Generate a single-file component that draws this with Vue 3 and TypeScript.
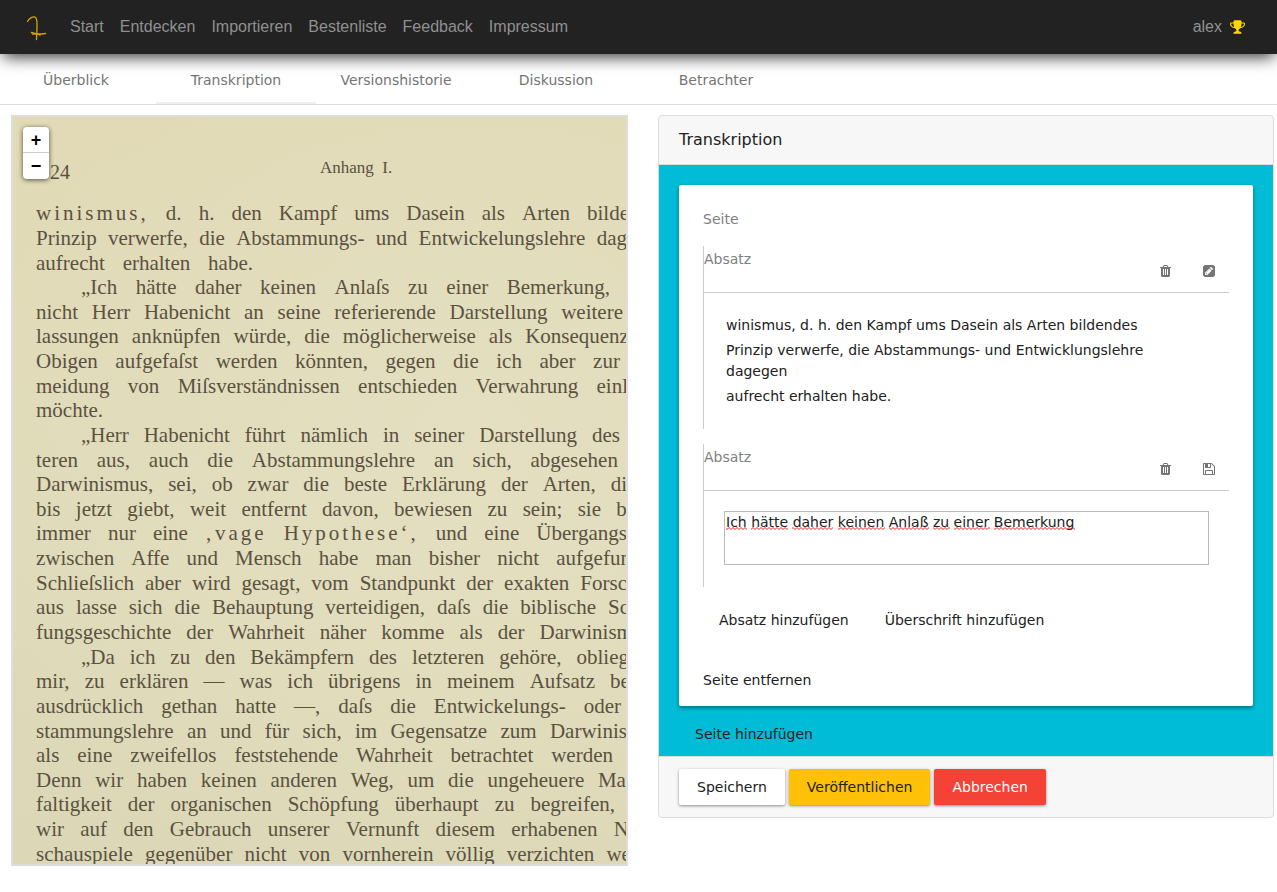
<script setup lang="ts">
import { ref } from 'vue'

interface ScanLine {
  text: string
  end: number
  indent?: boolean
}

const navItems = ['Start', 'Entdecken', 'Importieren', 'Bestenliste', 'Feedback', 'Impressum']
const tabs = ['Überblick', 'Transkription', 'Versionshistorie', 'Diskussion', 'Betrachter']
const activeTab = ref('Transkription')

// `end` is the width of the printed line in pixels, measured from the left text margin.
const scanLines: ScanLine[] = [
  { text: '*winismus, d. h. den Kampf ums Dasein als Arten bilde', end: 593 },
  { text: 'Prinzip verwerfe, die Abstammungs- und Entwickelungslehre dag', end: 591 },
  { text: 'aufrecht erhalten habe.', end: 217 },
  { text: '„Ich hätte daher keinen Anlaſs zu einer Bemerkung,', end: 574, indent: true },
  { text: 'nicht Herr Habenicht an seine referierende Darstellung weitere', end: 587 },
  { text: 'lassungen anknüpfen würde, die möglicherweise als Konsequenz', end: 593 },
  { text: 'Obigen aufgefaſst werden könnten, gegen die ich aber zur', end: 584 },
  { text: 'meidung von Miſsverständnissen entschieden Verwahrung einl', end: 592 },
  { text: 'möchte.', end: 73 },
  { text: '„Herr Habenicht führt nämlich in seiner Darstellung des', end: 584, indent: true },
  { text: 'teren aus, auch die Abstammungslehre an sich, abgesehen', end: 582 },
  { text: 'Darwinismus, sei, ob zwar die beste Erklärung der Arten, di', end: 591 },
  { text: 'bis jetzt giebt, weit entfernt davon, bewiesen zu sein; sie b', end: 591 },
  { text: 'immer nur eine *‚vage *Hypothese‘, und eine Übergangs', end: 591 },
  { text: 'zwischen Affe und Mensch habe man bisher nicht aufgefun', end: 595 },
  { text: 'Schlieſslich aber wird gesagt, vom Standpunkt der exakten Forsc', end: 591 },
  { text: 'aus lasse sich die Behauptung verteidigen, daſs die biblische Sc', end: 593 },
  { text: 'fungsgeschichte der Wahrheit näher komme als der Darwinism', end: 597 },
  { text: '„Da ich zu den Bekämpfern des letzteren gehöre, oblieg', end: 593, indent: true },
  { text: 'mir, zu erklären — was ich übrigens in meinem Aufsatz be', end: 594 },
  { text: 'ausdrücklich gethan hatte —, daſs die Entwickelungs- oder', end: 585 },
  { text: 'stammungslehre an und für sich, im Gegensatze zum Darwinis', end: 591 },
  { text: 'als eine zweifellos feststehende Wahrheit betrachtet werden', end: 577 },
  { text: 'Denn wir haben keinen anderen Weg, um die ungeheuere Ma', end: 590 },
  { text: 'faltigkeit der organischen Schöpfung überhaupt zu begreifen,', end: 579 },
  { text: 'wir auf den Gebrauch unserer Vernunft diesem erhabenen N', end: 593 },
  { text: 'schauspiele gegenüber nicht von vornherein völlig verzichten we', end: 595 },
]

const paragraph = [
  'winismus, d. h. den Kampf ums Dasein als Arten bildendes',
  'Prinzip verwerfe, die Abstammungs- und Entwicklungslehre dagegen',
  'aufrecht erhalten habe.',
]
const draft = ref('Ich hätte daher keinen Anlaß zu einer Bemerkung')
</script>

<template>
  <div class="app">
    <header class="navbar">
      <a class="brand" href="#" aria-label="Startseite">
        <svg viewBox="-1 -1 24 28" width="24" height="28" fill="none" stroke="#d9a300" stroke-linecap="round">
          <path stroke-width="1.3" d="M2.500 7.500C4.500 4 8 2.200 10 3.200C12.500 4.500 12 9 12 13L11.500 25.500" />
          <path stroke-width="1.5" d="M6.500 18.500C10 20.500 14 20.500 20.500 19.500M7.500 20C11 19.500 14 20 15 21" />
        </svg>
      </a>
      <nav class="nav">
        <a v-for="item in navItems" :key="item" href="#">{{ item }}</a>
      </nav>
      <a class="user" href="#">
        <span>alex</span>
        <svg viewBox="0 0 1664 1792" width="15" height="16" fill="#ffd700">
          <path d="M458 883q-74-162-74-371h-256v96q0 78 94.500 162t235.500 113zm1078-275v-96h-256q0 209-74 371 141-29 235.500-113t94.500-162zm128-128v128q0 71-41.500 143t-112 130-173 97.500-215.500 44.500q-42 54-95 95-38 34-52.500 72.500t-14.500 89.500q0 54 30.500 91t97.500 37q75 0 133.500 45.500t58.500 114.500v64q0 14-9 23t-23 9h-832q-14 0-23-9t-9-23v-64q0-69 58.500-114.500t133.500-45.500q67 0 97.500-37t30.500-91q0-51-14.500-89.500t-52.500-72.500q-53-41-95-95-113-5-215.500-44.500t-173-97.500-112-130-41.500-143v-128q0-40 28-68t68-28h288v-96q0-66 47-113t113-47h576q66 0 113 47t47 113v96h288q40 0 68 28t28 68z" />
        </svg>
      </a>
    </header>

    <nav class="tabs">
      <a
        v-for="tab in tabs"
        :key="tab"
        href="#"
        :class="{ active: tab === activeTab }"
        @click.prevent="activeTab = tab"
      >{{ tab }}</a>
    </nav>

    <main class="columns">
      <section class="viewer" aria-label="Scan">
        <div class="zoom">
          <button type="button" aria-label="Vergrößern">+</button>
          <button type="button" aria-label="Verkleinern">−</button>
        </div>
        <div class="folio">
          <span class="number">24</span>
          <span class="running">Anhang&nbsp; I.</span>
        </div>
        <div class="print">
          <div
            v-for="(line, i) in scanLines"
            :key="i"
            class="line"
            :class="{ indent: line.indent }"
            :style="{ width: line.end + 'px' }"
          >
            <span
              v-for="(word, j) in line.text.split(' ')"
              :key="j"
              :class="{ spaced: word.startsWith('*') }"
            >{{ word.replace('*', '') }}</span>
          </div>
        </div>
      </section>

      <section class="panel">
        <h1>Transkription</h1>
        <div class="body">
          <article class="sheet">
            <div class="label">Seite</div>

            <section class="block">
              <header>
                <span>Absatz</span>
                <div class="tools">
                  <button type="button" aria-label="Löschen">
                    <svg viewBox="0 0 1408 1792" width="11" height="14"><path d="M512 1376v-704q0-14-9-23t-23-9h-64q-14 0-23 9t-9 23v704q0 14 9 23t23 9h64q14 0 23-9t9-23zm256 0v-704q0-14-9-23t-23-9h-64q-14 0-23 9t-9 23v704q0 14 9 23t23 9h64q14 0 23-9t9-23zm256 0v-704q0-14-9-23t-23-9h-64q-14 0-23 9t-9 23v704q0 14 9 23t23 9h64q14 0 23-9t9-23zm-544-992h448l-48-117q-7-9-17-11h-317q-10 2-17 11zm928 32v64q0 14-9 23t-23 9h-96v948q0 83-47 143.500t-113 60.500h-832q-66 0-113-58.500t-47-141.500v-952h-96q-14 0-23-9t-9-23v-64q0-14 9-23t23-9h309l70-167q15-37 54-63t79-26h320q40 0 79 26t54 63l70 167h309q14 0 23 9t9 23z" /></svg>
                  </button>
                  <button type="button" aria-label="Bearbeiten">
                    <svg viewBox="0 0 1536 1792" width="12" height="14"><path d="M404 1108l152 152-52 52h-56v-96h-96v-56zm414-390q14 13-3 30l-291 291q-17 17-30 3-14-13 3-30l291-291q17-17 30-3zm-274 690l544-544-288-288-544 544v288h288zm608-608l92-92q28-28 28-68t-28-68l-152-152q-28-28-68-28t-68 28l-92 92zm384-384v960q0 119-84.500 203.500t-203.500 84.500h-960q-119 0-203.500-84.500t-84.500-203.500v-960q0-119 84.500-203.500t203.500-84.500h960q119 0 203.500 84.500t84.500 203.500z" /></svg>
                  </button>
                </div>
              </header>
              <div class="content">
                <div class="lines">
                  <p v-for="line in paragraph" :key="line">{{ line }}</p>
                </div>
              </div>
            </section>

            <section class="block">
              <header>
                <label for="draft">Absatz</label>
                <div class="tools">
                  <button type="button" aria-label="Löschen">
                    <svg viewBox="0 0 1408 1792" width="11" height="14"><path d="M512 1376v-704q0-14-9-23t-23-9h-64q-14 0-23 9t-9 23v704q0 14 9 23t23 9h64q14 0 23-9t9-23zm256 0v-704q0-14-9-23t-23-9h-64q-14 0-23 9t-9 23v704q0 14 9 23t23 9h64q14 0 23-9t9-23zm256 0v-704q0-14-9-23t-23-9h-64q-14 0-23 9t-9 23v704q0 14 9 23t23 9h64q14 0 23-9t9-23zm-544-992h448l-48-117q-7-9-17-11h-317q-10 2-17 11zm928 32v64q0 14-9 23t-23 9h-96v948q0 83-47 143.500t-113 60.500h-832q-66 0-113-58.500t-47-141.500v-952h-96q-14 0-23-9t-9-23v-64q0-14 9-23t23-9h309l70-167q15-37 54-63t79-26h320q40 0 79 26t54 63l70 167h309q14 0 23 9t9 23z" /></svg>
                  </button>
                  <button type="button" aria-label="Sichern">
                    <svg viewBox="0 0 1536 1792" width="12" height="14"><path d="M384 1536h768v-384h-768v384zm896 0h128v-896q0-14-10-38.500t-20-34.500l-281-281q-10-10-34-20t-39-10v416q0 40-28 68t-68 28h-576q-40 0-68-28t-28-68v-416h-128v1280h128v-416q0-40 28-68t68-28h832q40 0 68 28t28 68v416zm-384-928v-320q0-13-9.500-22.500t-22.500-9.500h-192q-13 0-22.500 9.500t-9.500 22.500v320q0 13 9.500 22.500t22.500 9.500h192q13 0 22.500-9.500t9.500-22.500zm640 32v928q0 40-28 68t-68 28h-1344q-40 0-68-28t-28-68v-1344q0-40 28-68t68-28h928q40 0 88 20t76 48l280 280q28 28 48 76t20 88z" /></svg>
                  </button>
                </div>
              </header>
              <div class="content editing">
                <textarea id="draft" v-model="draft" rows="3" spellcheck="false"></textarea>
                <svg class="squiggle" width="352" height="3" aria-hidden="true">
                  <defs>
                    <pattern id="wave" width="4" height="3" patternUnits="userSpaceOnUse">
                      <path d="M-1 0.500L1 2.500L3 0.500L5 2.500" fill="none" stroke="#e02020" />
                    </pattern>
                  </defs>
                  <g fill="url(#wave)">
                    <rect width="21" height="3" />
                    <rect x="25" width="37" height="3" />
                    <rect x="66" width="41" height="3" />
                    <rect x="112" width="47" height="3" />
                    <rect x="163" width="40" height="3" />
                    <rect x="207" width="17" height="3" />
                    <rect x="228" width="36" height="3" />
                    <rect x="268" width="81" height="3" />
                  </g>
                </svg>
              </div>
            </section>

            <div class="adders">
              <button type="button" class="flat">Absatz hinzufügen</button>
              <button type="button" class="flat">Überschrift hinzufügen</button>
            </div>
            <button type="button" class="remove">Seite entfernen</button>
          </article>
          <button type="button" class="flat">Seite hinzufügen</button>
        </div>
        <footer>
          <button type="button" class="raised">Speichern</button>
          <button type="button" class="raised publish">Veröffentlichen</button>
          <button type="button" class="raised cancel">Abbrechen</button>
        </footer>
      </section>
    </main>
  </div>
</template>

<style>
body {
  margin: 0;
  background: #fff;
}
</style>

<style scoped>
* {
  box-sizing: border-box;
}

.app {
  font: 14px/21px "DejaVu Sans", sans-serif;
  color: #212121;
}

a {
  text-decoration: none;
}

button {
  margin: 0;
  border: 0;
  background: none;
  font: inherit;
  color: inherit;
  cursor: pointer;
}

svg {
  display: block;
}

.navbar {
  position: relative;
  display: flex;
  align-items: center;
  height: 54px;
  padding: 0 32px 0 24px;
  background: #222;
  box-shadow: 0 6px 16px -3px rgba(0, 0, 0, 0.8);
  font: 16px/24px "Liberation Sans", Arial, sans-serif;
}

.nav {
  display: flex;
  flex: 1;
  gap: 16px;
  margin-left: 22px;
}

.nav a,
.user {
  color: #909090;
}

.user {
  display: flex;
  align-items: center;
  gap: 8px;
}

.tabs {
  display: flex;
  border-bottom: 1px solid #ddd;
  overflow: hidden;
}

.tabs a {
  width: 160px;
  padding: 16px 0 11px;
  border-bottom: 2px solid transparent;
  color: #757575;
  text-align: center;
}

.tabs a:first-child {
  margin-left: -4px;
}

.tabs a.active {
  border-bottom-color: #eee;
}

.columns {
  display: grid;
  grid-template-columns: minmax(0, 617fr) minmax(0, 616fr);
  align-items: start;
  gap: 30px;
  padding: 10px 3px 0 11px;
}

.viewer {
  position: relative;
  display: flex;
  flex-direction: column;
  height: calc(100vh - 141px);
  border: 2px solid #ddd;
  overflow: hidden;
  background:
    radial-gradient(ellipse at 75% 45%, rgba(228, 224, 194, 0.8), transparent 80%),
    linear-gradient(180deg, #e2dab6, #dfdbba 60%, #dcd8b7);
  color: #5b5141;
  font-family: "Liberation Serif", "Times New Roman", serif;
}

.zoom {
  position: absolute;
  top: 10px;
  left: 10px;
  width: 26px;
  border-radius: 4px;
  background: #fff;
  box-shadow: 0 1px 5px rgba(0, 0, 0, 0.65);
}

.zoom button {
  display: block;
  width: 26px;
  height: 26px;
  padding: 0;
  color: #000;
  font: bold 18px/26px "Liberation Sans", Arial, sans-serif;
}

.zoom button:first-child {
  border-bottom: 1px solid #ccc;
}

.folio {
  display: flex;
  padding: 39px 0 0 37px;
  line-height: 24px;
}

.number {
  width: 270px;
  padding-top: 4px;
  font-size: 20px;
}

.running {
  font-size: 17px;
}

.print {
  display: grid;
  flex: 1;
  grid-template-rows: repeat(27, minmax(0, 1fr));
  margin: 17px 0 -2px 23px;
  font-size: 21px;
}

.line {
  display: flex;
  align-items: center;
  justify-content: space-between;
  line-height: 24px;
  white-space: nowrap;
}

.indent {
  padding-left: 45px;
}

.spaced {
  letter-spacing: 3px;
}

.panel {
  border: 1px solid #ddd;
  border-radius: 4px;
  overflow: hidden;
  background: #f7f7f7;
}

h1 {
  margin: 0;
  padding: 12px 20px;
  border-bottom: 1px solid #ddd;
  font-size: 16px;
  font-weight: 400;
  line-height: 24px;
}

.body {
  padding: 20px 20px 4px;
  background: #00bcd7;
}

.sheet {
  margin-bottom: 10px;
  padding: 24px 24px 16px;
  border-radius: 2px;
  background: #fff;
  box-shadow: 0 2px 4px rgba(0, 0, 0, 0.4);
}

.label {
  margin-bottom: 16px;
  color: #808080;
}

.block {
  margin-bottom: 15px;
  border-left: 1px solid #ccc;
}

.block header {
  display: flex;
  justify-content: space-between;
  height: 47px;
  padding-top: 3px;
  border-bottom: 1px solid #ccc;
  color: #808080;
}

.tools {
  display: flex;
  align-items: center;
  padding-right: 4px;
}

.tools button {
  display: grid;
  place-items: center;
  width: 32px;
  height: 36px;
  margin-left: 12px;
  padding: 0;
}

.tools svg {
  fill: #757575;
}

.content {
  position: relative;
  padding: 20px;
}

.lines {
  display: flex;
  flex-direction: column;
  gap: 4px;
  padding: 2px;
}

p {
  margin: 0;
}

.editing {
  padding-bottom: 22px;
}

textarea {
  display: block;
  width: 100%;
  height: 54px;
  padding: 1px;
  border: 1px solid #bbb;
  border-radius: 0;
  outline: 0;
  resize: none;
  background: #fff;
  color: inherit;
  font: inherit;
  line-height: 18px;
}

.squiggle {
  position: absolute;
  top: 36px;
  left: 22px;
  pointer-events: none;
}

.adders {
  display: flex;
  gap: 4px;
  margin-bottom: 24px;
}

.flat,
.raised {
  height: 36px;
  border-radius: 2px;
}

.flat {
  display: block;
  padding: 0 16px;
}

.remove {
  display: block;
  height: 36px;
  padding: 0;
  margin-bottom: -8px;
}

footer {
  display: flex;
  gap: 4px;
  padding: 12px 20px;
  border-top: 1px solid #ddd;
}

.raised {
  padding: 0 18px;
  background: #fff;
  box-shadow: 0 1px 3px rgba(0, 0, 0, 0.45);
}

.publish {
  background: #ffc107;
}

.cancel {
  background: #f44336;
  color: #fff;
}
</style>
